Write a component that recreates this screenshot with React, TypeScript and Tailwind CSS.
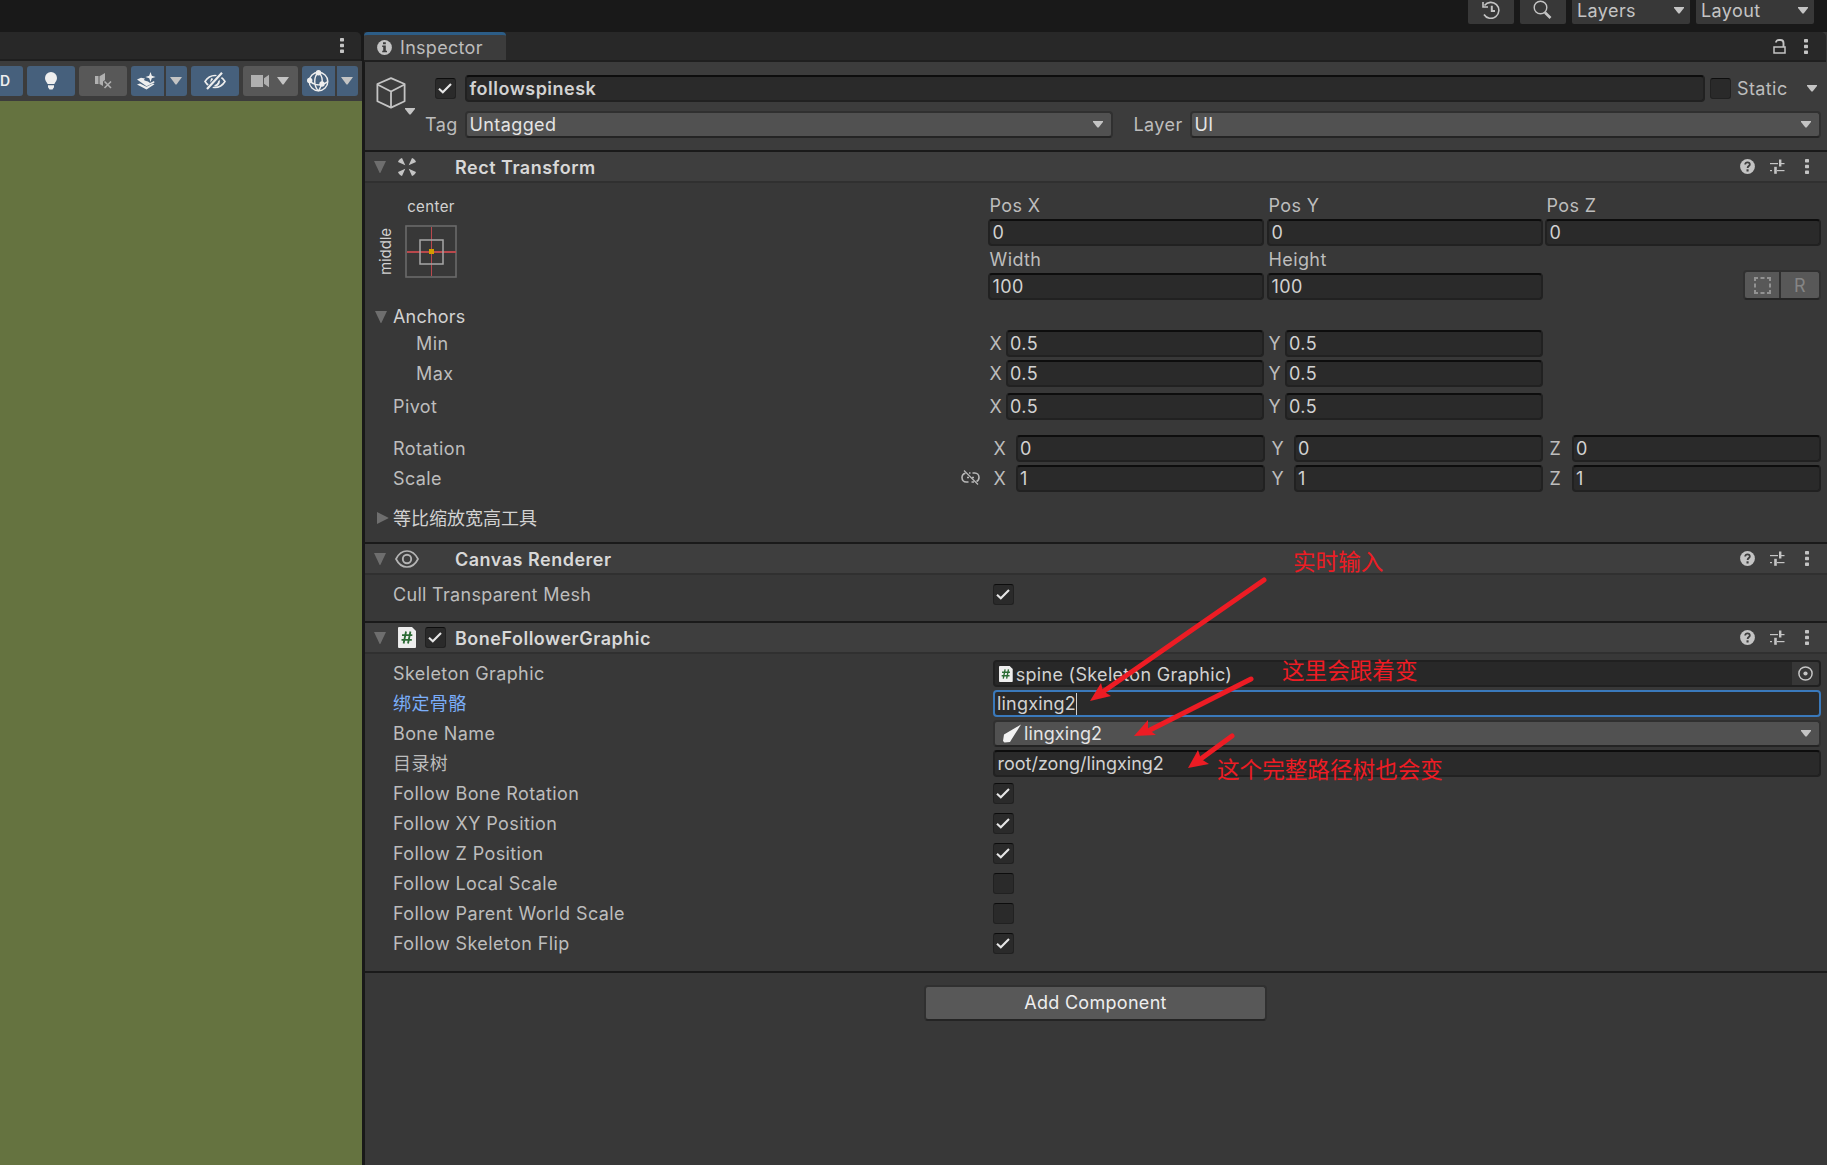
import type { ReactNode } from "react";
import clsx from "clsx";

// ---------- icons ----------

function Caret({ className = "" }: { className?: string }) {
  return (
    <svg width="10" height="7" viewBox="0 0 10 7" className={clsx("shrink-0", className)}>
      <path d="M0 0h10v1L5.6 6.6h-1.2L0 1z" fill="#c4c4c4" />
    </svg>
  );
}

function Foldout({ open = true }: { open?: boolean }) {
  return (
    <svg width="12" height="12" viewBox="0 0 12 12" className="shrink-0">
      <path d={open ? "M0 0h12L6.3 12h-.6z" : "M0 0v12L11.4 6.3v-.6z"} fill="#6e6e6e" />
    </svg>
  );
}

function Dots() {
  return (
    <svg width="4" height="15" viewBox="0 0 4 15" fill="#c4c4c4" className="shrink-0">
      <rect width="4" height="3.4" y="0" rx=".7" />
      <rect width="4" height="3.4" y="5.8" rx=".7" />
      <rect width="4" height="3.4" y="11.6" rx=".7" />
    </svg>
  );
}

function HelpIcon() {
  return (
    <svg width="15" height="15" viewBox="0 0 15 15" className="shrink-0">
      <circle cx="7.5" cy="7.5" r="7.4" fill="#c4c4c4" />
      <path d="M5.2 5.6c0-1.5 1-2.3 2.3-2.3s2.3.8 2.3 2.1c0 1.6-2.2 1.7-2.2 3.6" fill="none" stroke="#3e3e3e" strokeWidth="1.8" />
      <rect x="6.5" y="10.3" width="2.1" height="2.2" fill="#3e3e3e" />
    </svg>
  );
}

function PresetIcon() {
  return (
    <svg width="15" height="15" viewBox="0 0 15 15" fill="#c4c4c4" className="shrink-0">
      <rect x="0" y="4" width="8" height="1.2" />
      <rect x="9" y="0.5" width="2.4" height="7" />
      <rect x="11" y="4" width="3.5" height="1.2" />
      <rect x="0" y="11" width="2" height="1.2" />
      <rect x="4.2" y="7.8" width="2.6" height="7" />
      <rect x="7" y="11" width="7.5" height="1.2" />
    </svg>
  );
}

function CubeIcon() {
  return (
    <svg width="30" height="32" viewBox="0 0 30 32" fill="none" stroke="#c4c4c4" strokeWidth="1.8" strokeLinejoin="round" className="shrink-0">
      <path d="M15 1.2L28.6 7v17.2L15 30.6 1.4 24.2V7z" />
      <path d="M1.4 7.5L15 14.5l13.6-7M15 14.5v16" />
    </svg>
  );
}

function RectTransformIcon() {
  return (
    <svg width="18" height="18" viewBox="0 0 18 18" fill="#c4c4c4">
      <path d="M4 0L7.3 7.3 0 4C.3 2.6 2.6.3 4 0z M14 0L10.700 7.300 18 4C17.700 2.600 15.400.3 14 0z M4 18L7.300 10.700 0 14c.3 1.400 2.600 3.700 4 4z M14 18l-3.300-7.300L18 14c-.3 1.400-2.600 3.700-4 4z" />
    </svg>
  );
}

function EyeIcon() {
  return (
    <svg width="24" height="18" viewBox="0 0 24 18" fill="none" stroke="#b4b4b4" strokeWidth="1.7">
      <path d="M1 9C3.500 4 7.500 1 12 1s8.500 3 11 8c-2.500 5-6.500 8-11 8S3.500 14 1 9z" />
      <circle cx="12" cy="9" r="4.2" strokeWidth="1.9" />
    </svg>
  );
}

function ScriptIcon({ size = 21 }: { size?: number }) {
  return (
    <svg width={size * 0.86} height={size} viewBox="0 0 18 21" className="shrink-0">
      <path d="M1 0h13l4 4v16a1 1 0 0 1-1 1H1a1 1 0 0 1-1-1V1a1 1 0 0 1 1-1z" fill="#eeeeee" />
      <path d="M8 4.500L5.600 16.500M12.400 4.500L10 16.500M4 8.200h10.300M3.500 12.800h10.300" stroke="#2b6b34" strokeWidth="1.8" fill="none" />
    </svg>
  );
}

function LockIcon() {
  return (
    <svg width="13" height="15" viewBox="0 0 13 15" fill="none" stroke="#c4c4c4" strokeWidth="1.5">
      <path d="M1 8h11v6H1z" />
      <path d="M3 3.600C3 1.800 4.200 1 6 1h1.500C9.500 1 10.500 2 10.500 4v4" strokeWidth="1.9" />
    </svg>
  );
}

function InfoIcon() {
  return (
    <svg width="15" height="15" viewBox="0 0 15 15">
      <circle cx="7.5" cy="7.5" r="7.4" fill="#c4c4c4" />
      <path d="M6 2.300h2.800v2H6zM5.200 5.600h3.600v5.200h1.200v1.500H5.200v-1.500h1V7.100h-1z" fill="#3c3c3c" />
    </svg>
  );
}

function BrokenLinkIcon() {
  return (
    <svg width="19" height="16" viewBox="0 0 19 16" fill="none" stroke="#b8b8b8" strokeWidth="1.6">
      <path d="M4.500 3.200C2.400 3.600 1 5.400 1 7.500 1 10 2.800 12 5.200 12H7.500M8 3h1.500M11.500 3h2.300C16.200 3 18 5 18 7.500c0 1.900-1 3.300-2.500 4M10.500 12h2.500" />
      <path d="M3 .5l14 14" strokeWidth="1.3" />
      <path d="M6 7.500h2M11 7.500h2" strokeWidth="1.3" />
    </svg>
  );
}

// ---------- controls ----------

function Checkbox({ checked = false, className = "" }: { checked?: boolean; className?: string }) {
  return (
    <div className={clsx("flex h-[21px] w-[21px] shrink-0 items-center justify-center rounded-[3px] border border-[#212121] border-t-[#0d0d0d] bg-[#2a2a2a] pr-px", className)}>
      {checked && (
        <svg width="14" height="11" viewBox="0 0 14 11" fill="none" stroke="#e6e6e6" strokeWidth="2.1" className="shrink-0">
          <path d="M1 5.800l3.800 3.500L13 1" />
        </svg>
      )}
    </div>
  );
}

function Field({ value, className = "" }: { value: string; className?: string }) {
  return (
    <div className={clsx("flex h-[27px] items-center rounded-[4px] border-2 border-[#212121] border-t-[#0d0d0d] bg-[#2a2a2a] pl-[2.5px] text-[#d2d2d2]", className)}>
      {value}
    </div>
  );
}

function Popup({ children, className = "" }: { children: ReactNode; className?: string }) {
  return (
    <div className={clsx("flex h-[27px] items-center justify-between rounded-[4px] border-2 border-[#303030] border-b-[#242424] bg-[#515151] pl-[3px] pr-2 text-[#e4e4e4]", className)}>
      <span className="flex items-center">{children}</span>
      <Caret />
    </div>
  );
}

function Axis({ name, value, wide = false, className = "" }: { name: string; value: string; wide?: boolean; className?: string }) {
  return (
    <div className={clsx("flex items-center", wide ? "w-[277px] pl-[5.5px]" : "w-[276px] pl-[1.5px]", className)}>
      <span className={clsx("shrink-0", wide ? "w-[22px]" : "w-4")}>{name}</span>
      <Field value={value} className="flex-1" />
    </div>
  );
}

function SectionHeader({ title, icon, enabled }: { title: string; icon: ReactNode; enabled?: boolean }) {
  return (
    <div className="flex h-[33px] items-center border-y-2 border-t-[#1a1a1a] border-b-[#303030] bg-[#3e3e3e] pl-[9px] pr-[18px]">
      <Foldout />
      <span className="ml-[7px] flex w-[28px] justify-center">{icon}</span>
      <span className="ml-[4px] flex w-[30px]">{enabled && <Checkbox checked />}</span>
      <span className="pt-[2px] font-semibold tracking-[0.5px] text-[#d8d8d8]">{title}</span>
      <span className="ml-auto flex items-center">
        <HelpIcon />
        <span className="ml-[15px] flex"><PresetIcon /></span>
        <span className="ml-[20px] flex"><Dots /></span>
      </span>
    </div>
  );
}

function Property({ label, active, children }: { label: string; active?: boolean; children: ReactNode }) {
  return (
    <div className="flex h-[27px] items-center">
      <span className={clsx("w-[600px] shrink-0 pt-px", active && "text-[#7baefa]")}>{label}</span>
      {children}
    </div>
  );
}

// ---------- scene view ----------

function ToolButton({ on, className = "", children }: { on?: boolean; className?: string; children?: ReactNode }) {
  return (
    <div className={clsx("flex h-[30px] shrink-0 items-center", on ? "bg-[#46607c]" : "bg-[#585858]", className)}>
      {children}
    </div>
  );
}

function BigCaret() {
  return (
    <svg width="12" height="8" viewBox="0 0 12 8" className="shrink-0">
      <path d="M0 0h12L6.500 7.500h-1z" fill="#c4c4c4" />
    </svg>
  );
}

function SceneView() {
  return (
    <div className="flex w-[362px] shrink-0 flex-col">
      <div className="mr-px flex h-[29px] items-center justify-end rounded-tr-[5px] border-b-2 border-[#1f1f1f] bg-[#282828] pr-[17px]">
        <Dots />
      </div>
      <div className="flex h-10 items-center bg-[#3c3c3c]">
        <ToolButton on className="w-[23px] rounded-r-[3px] text-[14px] font-semibold tracking-normal text-[#eee]">D</ToolButton>
        <ToolButton on className="ml-1 w-12 justify-center rounded-[3px]">
          <svg width="12" height="18" viewBox="0 0 12 18" fill="#eeeeee">
            <path d="M6 0a6 6 0 0 1 6 6c0 2.600-1.600 3.800-2.600 6H2.600C1.600 9.800 0 8.600 0 6a6 6 0 0 1 6-6zM3 13.200h6v2L7.500 17.500h-3L3 15.200z" />
          </svg>
        </ToolButton>
        <ToolButton className="ml-1 w-12 justify-center rounded-[3px]">
          <svg width="17" height="16" viewBox="0 0 17 16">
            <path d="M0 3h3.500v8H0zM4.500 3.200L10 0v7l-2 1.500V13L4.500 11z" fill="#b0b0b0" />
            <path d="M9.500 8.500l6.500 6.500M16 8.500L9.500 15" stroke="#b0b0b0" strokeWidth="1.6" />
          </svg>
        </ToolButton>
        <ToolButton on className="ml-1 w-[33px] rounded-l-[3px] pl-[6px]">
          <svg width="19" height="18" viewBox="0 0 19 18" fill="#eeeeee">
            <path d="M13.500 0l1.300 3.700 3.700 1.300-3.700 1.300L13.500 10l-1.300-3.700L8.500 5l3.700-1.300z" />
            <path d="M0 7.500l4-1.800 4 .8-1.200 1.500 2.200 1 2 .5L13 11l4-2 .5 1.500-8 3.800z" />
            <path d="M0 12.500l3-1 6.500 3.200 6.500-3.200 1.500.8-8 5.200z" />
          </svg>
        </ToolButton>
        <ToolButton on className="ml-[2px] w-[21px] rounded-r-[3px] pl-1"><BigCaret /></ToolButton>
        <ToolButton on className="ml-1 w-12 rounded-[3px] pl-[13px]">
          <svg width="22" height="18" viewBox="0 0 22 18" fill="none" stroke="#eeeeee" strokeWidth="1.6">
            <path d="M1 9.500C3.500 5.500 7 3.500 11 3.500s7.500 2 10 6c-2.500 4-6 6-10 6s-7.500-2-10-6z" />
            <path d="M8.500 6.500C7 8 7 11 8 12.500M14 7c1 1.500 1 4-.5 5.500-1 1-2.500 1.200-3.500.5" strokeWidth="2" />
            <path d="M4.500 16.500L18 1" stroke="#46607c" strokeWidth="5" />
            <path d="M3 17L18 .8" strokeWidth="2.2" />
          </svg>
        </ToolButton>
        <ToolButton className="ml-1 w-[55px] gap-2 rounded-[3px] pl-2">
          <svg width="18" height="14" viewBox="0 0 18 14" fill="#b0b0b0">
            <path d="M0 1h12v12H0zM13 4.200L18 .8v12.400L13 9.800z" />
          </svg>
          <BigCaret />
        </ToolButton>
        <ToolButton on className="ml-1 w-[33px] rounded-l-[3px] pl-[5px]">
          <svg width="22" height="22" viewBox="0 0 22 22" fill="none" stroke="#eeeeee" strokeWidth="1.4">
            <circle cx="11.5" cy="11.5" r="9.3" />
            <path d="M11.500 2c-5 5-5 14 0 19M11.500 2c3.500 4 4.500 9 3 12.500-.8 2.500-1.800 4.500-3 6.500M2.200 10.500c3.500 4 9 5 12.500 4 2.500-.5 4.500-1.500 6-3" />
            <circle cx="11.5" cy="2.8" r="2.7" fill="#eeeeee" stroke="none" />
            <circle cx="2.7" cy="10.5" r="2.7" fill="#eeeeee" stroke="none" />
            <circle cx="15" cy="14" r="2.7" fill="#eeeeee" stroke="none" />
          </svg>
        </ToolButton>
        <ToolButton on className="ml-[2px] w-[21px] rounded-r-[3px] pl-1"><BigCaret /></ToolButton>
      </div>
      <div className="flex-1 bg-[#657340]" />
    </div>
  );
}

// ---------- main toolbar ----------

function MainToolbar() {
  return (
    <div className="flex h-8 items-start justify-end gap-[6px] bg-[#191919] pr-[13px] text-[#c4c4c4]">
      <div className="flex h-6 w-[46px] items-start justify-center rounded-b-[2px] bg-[#383838]">
        <svg width="18" height="18" viewBox="0 0 18 18" fill="none" stroke="#c4c4c4" strokeWidth="1.6" className="mt-[1px]">
          <path d="M2.500 4.500A8 8 0 1 1 2 13.500M1 1v5h5" />
          <path d="M9.800 4.800v5.200h3.200" strokeWidth="2" />
        </svg>
      </div>
      <div className="flex h-6 w-[46px] items-start justify-center rounded-b-[2px] bg-[#383838] pr-px">
        <svg width="19" height="19" viewBox="0 0 19 19" fill="none" stroke="#c4c4c4" strokeWidth="1.4">
          <circle cx="7.5" cy="7.5" r="6.3" />
          <path d="M12 12.500l5.500 5.500" strokeWidth="2.6" />
        </svg>
      </div>
      {["Layers", "Layout"].map((name) => (
        <div key={name} className="flex h-6 w-[118px] items-center justify-between rounded-b-[2px] bg-[#383838] pb-[3px] pl-[5px] pr-[6px]">
          {name}
          <Caret />
        </div>
      ))}
    </div>
  );
}

// ---------- inspector ----------

function ObjectHeader() {
  return (
    <div className="flex h-[88px] bg-[#3c3c3c]">
      <div className="flex w-[50px] shrink-0 pl-[11px] pt-[15px]">
        <CubeIcon />
        <Caret className="-ml-[1px] mt-[31px]" />
      </div>
      <div className="flex flex-1 flex-col pr-[6px] pt-[13px]">
        <div className="flex h-[27px] items-center pl-5">
          <Checkbox checked />
          <Field value="followspinesk" className="ml-[9px] w-[1240px] pt-px font-semibold tracking-[0.5px]" />
          <Checkbox className="ml-[5px]" />
          <span className="ml-[6px]">Static</span>
          <Caret className="ml-auto mr-[4px]" />
        </div>
        <div className="mt-[9px] flex h-[27px] items-center pl-[10px]">
          <span className="w-[39.5px]">Tag</span>
          <Popup className="w-[648px]">Untagged</Popup>
          <span className="ml-[21px] w-[56px]">Layer</span>
          <Popup className="flex-1">UI</Popup>
        </div>
      </div>
    </div>
  );
}

function AnchorPreset() {
  return (
    <div className="flex w-[623px] shrink-0 pl-[10px] pt-[15px]">
      <div className="mt-[23px] flex h-[60px] w-5 items-center justify-center">
        <span className="-rotate-90 whitespace-nowrap text-[15px] tracking-[-0.1px] text-[#d2d2d2]">middle</span>
      </div>
      <div className="ml-[10px] flex w-[52px] flex-col items-center">
        <span className="h-[27px] pt-px text-[15px] leading-[16px] tracking-[0.4px] text-[#d2d2d2]">center</span>
        <svg width="52" height="53" viewBox="0 0 52 53" fill="none">
          <rect x="1" y="1" width="50" height="51" stroke="#6a6a6a" strokeWidth="1.6" />
          <path d="M26.500 2v49" stroke="#b9484c" strokeWidth="1" />
          <path d="M2 27h49" stroke="#b9484c" strokeWidth="2" />
          <rect x="15" y="15" width="23" height="24" stroke="#a6a6a6" strokeWidth="1.5" />
          <rect x="24" y="24" width="5" height="5" fill="#d29c00" />
        </svg>
      </div>
    </div>
  );
}

const positions = [
  { name: "Pos X", value: "0" },
  { name: "Pos Y", value: "0" },
  { name: "Pos Z", value: "0" },
];

function RectTransform() {
  return (
    <section>
      <SectionHeader title="Rect Transform" icon={<RectTransformIcon />} />
      <div className="flex h-[117px]">
        <AnchorPreset />
        <div className="flex flex-col">
          <div className="grid grid-cols-[279px_278px_276px] pt-[9px]">
            {positions.map((p) => (
              <div key={p.name} className="w-[276px]">
                <div className="flex h-[27px] items-center pl-[1.5px]">{p.name}</div>
                <Field value={p.value} />
              </div>
            ))}
          </div>
          <div className="grid grid-cols-[279px_278px_276px]">
            <div className="w-[276px]">
              <div className="flex h-[27px] items-center pl-[1.5px]">Width</div>
              <Field value="100" />
            </div>
            <div className="w-[276px]">
              <div className="flex h-[27px] items-center pl-[1.5px]">Height</div>
              <Field value="100" />
            </div>
            <div className="flex items-end justify-end">
              <div className="flex h-[30px] w-[78px] rounded-[4px] border-2 border-[#303030] border-b-[#242424] bg-[#585858]">
                <div className="flex w-[36px] items-center justify-center border-r-2 border-[#303030]">
                  <svg width="17" height="17" viewBox="0 0 17 17" fill="none" stroke="#929292" strokeWidth="2">
                    <path d="M4 1H1v3M13 1h3v3M4 16H1v-3M13 16h3v-3M6.500 1h4M6.500 16h4M1 6.500v4M16 6.500v4" />
                  </svg>
                </div>
                <div className="flex flex-1 items-center justify-center pt-px text-[#858585]">R</div>
              </div>
            </div>
          </div>
        </div>
      </div>
      <div className="flex h-[30px] items-center pl-[10px] pt-1">
        <Foldout />
        <span className="ml-[6px] tracking-[0.2px] text-[#d2d2d2]">Anchors</span>
      </div>
      {["Min", "Max", "Pivot"].map((name) => (
        <div key={name} className={clsx("flex h-[27px] items-center", name === "Max" && "mt-[3px]", name === "Pivot" && "mt-[6px]")}>
          <span className={clsx("w-[623px]", name === "Pivot" ? "pl-[28px]" : "pl-[51px]")}>{name}</span>
          <Axis name="X" value="0.5" />
          <Axis name="Y" value="0.5" className="ml-[3px]" />
        </div>
      ))}
      <div className="mt-[15px] flex h-[27px] items-center">
        <span className="w-[623px] pl-[28px]">Rotation</span>
        <Axis name="X" value="0" wide />
        <Axis name="Y" value="0" wide className="ml-[1px]" />
        <Axis name="Z" value="0" wide className="ml-[1px]" />
      </div>
      <div className="mt-[3px] flex h-[27px] items-center">
        <span className="w-[595.5px] pl-[28px]">Scale</span>
        <span className="w-[27.5px] pb-[2px]"><BrokenLinkIcon /></span>
        <Axis name="X" value="1" wide />
        <Axis name="Y" value="1" wide className="ml-[1px]" />
        <Axis name="Z" value="1" wide className="ml-[1px]" />
      </div>
      <div className="mt-[12px] flex h-[38px] items-start pl-[12px]">
        <span className="flex h-[27px] items-center"><Foldout open={false} /></span>
        <span className="ml-[4px] leading-[29px] tracking-normal text-[#d2d2d2]">等比缩放宽高工具</span>
      </div>
    </section>
  );
}

function CanvasRenderer() {
  return (
    <section className="h-[79px]">
      <SectionHeader title="Canvas Renderer" icon={<EyeIcon />} />
      <div className="pl-[28px] pt-[6px] tracking-[0.3px]">
        <Property label="Cull Transparent Mesh">
          <Checkbox checked />
        </Property>
      </div>
    </section>
  );
}

const toggles = [
  { label: "Follow Bone Rotation", on: true },
  { label: "Follow XY Position", on: true },
  { label: "Follow Z Position", on: true },
  { label: "Follow Local Scale", on: false },
  { label: "Follow Parent World Scale", on: false },
  { label: "Follow Skeleton Flip", on: true },
];

function BoneFollower() {
  return (
    <section className="h-[350px]">
      <SectionHeader title="BoneFollowerGraphic" icon={<ScriptIcon />} enabled />
      <div className="flex flex-col gap-[3px] pl-[28px] pr-[6px] pt-[6px]">
        <Property label="Skeleton Graphic">
          <div className="flex h-[27px] flex-1 items-center overflow-hidden rounded-[4px] border-2 border-[#202020] bg-[#282828] pl-1 text-[#d2d2d2]">
            <ScriptIcon size={16} />
            <span className="ml-[3px] pt-[2px] tracking-[0.3px]">spine (Skeleton Graphic)</span>
            <span className="ml-auto flex h-full w-[27px] items-center justify-center bg-[#373737]">
              <svg width="15" height="15" viewBox="0 0 15 15">
                <circle cx="7.5" cy="7.5" r="6.6" fill="none" stroke="#c4c4c4" strokeWidth="1.5" />
                <circle cx="7.5" cy="7.5" r="2.1" fill="#c4c4c4" />
              </svg>
            </span>
          </div>
        </Property>
        <Property label="绑定骨骼" active>
          <div className="flex h-[27px] flex-1 items-center rounded-[4px] border-2 border-[#3a79bb] bg-[#2a2a2a] pl-[2px] tracking-[0.2px] text-[#d2d2d2]">
            lingxing2
            <span className="h-[22px] w-px bg-[#d2d2d2]" />
          </div>
        </Property>
        <Property label="Bone Name">
          <Popup className="flex-1">
            <svg width="20" height="19" viewBox="0 0 20 19" className="ml-[4px] mr-[2px]">
              <path d="M19 .5L9.500 15.500 8 18l-5.500.5L1 17l1-6.500z" fill="#f2f2f2" />
            </svg>
            <span className="tracking-[0.1px]">lingxing2</span>
          </Popup>
        </Property>
        <Property label="目录树">
          <Field value="root/zong/lingxing2" className="flex-1 tracking-[0px]" />
        </Property>
        {toggles.map((t) => (
          <Property key={t.label} label={t.label}>
            <Checkbox checked={t.on} />
          </Property>
        ))}
      </div>
    </section>
  );
}

function Inspector() {
  return (
    <div className="flex flex-1 flex-col">
      <div className="-ml-px mr-px flex h-[30px] items-stretch rounded-tr-[5px] border-b-2 border-[#1f1f1f] bg-[#282828] pr-[18px]">
        <div className="flex w-[142px] items-center rounded-t-[4px] border-t-[3px] border-[#2c5d87] bg-[#3c3c3c] pl-[13px]">
          <InfoIcon />
          <span className="ml-[8px] pt-px tracking-[0.3px]">Inspector</span>
        </div>
        <div className="ml-auto flex items-center">
          <LockIcon />
          <span className="ml-[18px] flex"><Dots /></span>
        </div>
      </div>
      <ObjectHeader />
      <RectTransform />
      <CanvasRenderer />
      <BoneFollower />
      <div className="flex flex-1 items-start border-t-2 border-[#1a1a1a] pl-[559px] pt-[12px]">
        <div className="flex h-[36px] w-[343px] items-center justify-center rounded-[4px] border-2 border-[#303030] border-b-[#242424] bg-[#585858] tracking-[0.3px] text-[#eeeeee]">
          Add Component
        </div>
      </div>
    </div>
  );
}

// Red hand-placed notes and arrows floating over the inspector
function Annotations() {
  return (
    <div className="pointer-events-none absolute inset-0 text-[22.6px] leading-none tracking-normal text-[#ed1c24]">
      <svg width="1827" height="1165" viewBox="0 0 1827 1165" className="absolute inset-0" fill="#ed1c24" stroke="#ed1c24" strokeLinecap="round">
        <path d="M1264 580L1104 691" strokeWidth="5" />
        <path d="M1090 701L1101 683 1103 691 1111 696z" stroke="none" />
        <path d="M1251 679L1150 730" strokeWidth="5" />
        <path d="M1134 736L1148 720 1148 729 1156 735z" stroke="none" />
        <path d="M1232 736L1202 758" strokeWidth="5" />
        <path d="M1188 768L1198 750 1201 759 1209 764z" stroke="none" />
      </svg>
      <span className="absolute left-[1293px] top-[551px]">实时输入</span>
      <span className="absolute left-[1282px] top-[660px]">这里会跟着变</span>
      <span className="absolute left-[1217px] top-[759px]">这个完整路径树也会变</span>
    </div>
  );
}

export default function App() {
  return (
    <div className="relative flex h-[1165px] w-[1827px] flex-col overflow-hidden bg-[#191919] font-['Inter','Noto_Sans_CJK_SC',sans-serif] text-[18px] leading-none tracking-[0.4px] text-[#bdbdbd]">
      <MainToolbar />
      <div className="flex flex-1">
        <SceneView />
        <div className="ml-[3px] flex flex-1 bg-[#383838]">
          <Inspector />
        </div>
      </div>
      <Annotations />
    </div>
  );
}
